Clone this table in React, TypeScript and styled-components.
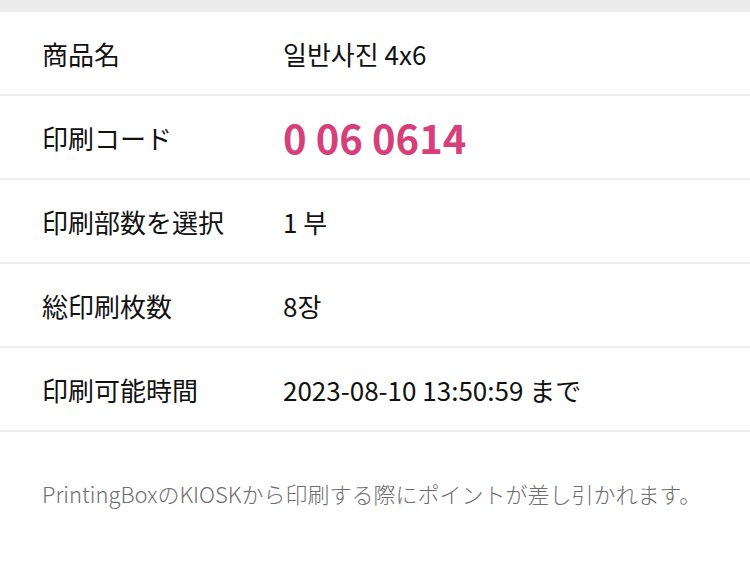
import React from "react";
import styled, { createGlobalStyle } from "styled-components";

const Global = createGlobalStyle`
  html, body { margin: 0; padding: 0; background: #fff; }
  body { font-family: "Noto Sans CJK JP", "Noto Sans CJK KR", "Noto Sans", sans-serif; }
`;

const Page = styled.div`
  width: 750px;
  min-height: 584px;
  background: #fff;
`;

const TopBar = styled.div`
  height: 12px;
  background: #ececec;
`;

const Table = styled.div`
  display: flex;
  flex-direction: column;
`;

const Row = styled.div`
  display: grid;
  grid-template-columns: 241px 1fr;
  align-items: center;
  height: 82px;
  padding: 0 42px;
  border-bottom: 2px solid #f0f0f0;
`;

const Label = styled.div`
  font-family: "Noto Sans CJK JP", sans-serif;
  font-size: 26px;
  color: #111;
  white-space: nowrap;
`;

const Value = styled.div<{ $code?: boolean }>`
  font-family: "Noto Sans CJK KR", "Noto Sans CJK JP", sans-serif;
  font-size: ${(p) => (p.$code ? "40px" : "26px")};
  font-weight: ${(p) => (p.$code ? 700 : 400)};
  color: ${(p) => (p.$code ? "#d63f79" : "#111")};
  white-space: nowrap;
`;

const Note = styled.p`
  margin: 0;
  padding: 45px 42px 0;
  font-family: "Noto Sans CJK JP", sans-serif;
  font-size: 22px;
  color: #6e6e6e;
  font-weight: 300;
`;

const rows: { label: string; value: string; code?: boolean }[] = [
  { label: "商品名", value: "일반사진 4x6" },
  { label: "印刷コード", value: "0 06 0614", code: true },
  { label: "印刷部数を選択", value: "1 부" },
  { label: "総印刷枚数", value: "8장" },
  { label: "印刷可能時間", value: "2023-08-10 13:50:59 まで" },
];

export default function App() {
  return (
    <Page>
      <Global />
      <TopBar />
      <Table>
        {rows.map((r) => (
          <Row key={r.label}>
            <Label>{r.label}</Label>
            <Value $code={r.code}>{r.value}</Value>
          </Row>
        ))}
      </Table>
      <Note>PrintingBoxのKIOSKから印刷する際にポイントが差し引かれます。</Note>
    </Page>
  );
}
